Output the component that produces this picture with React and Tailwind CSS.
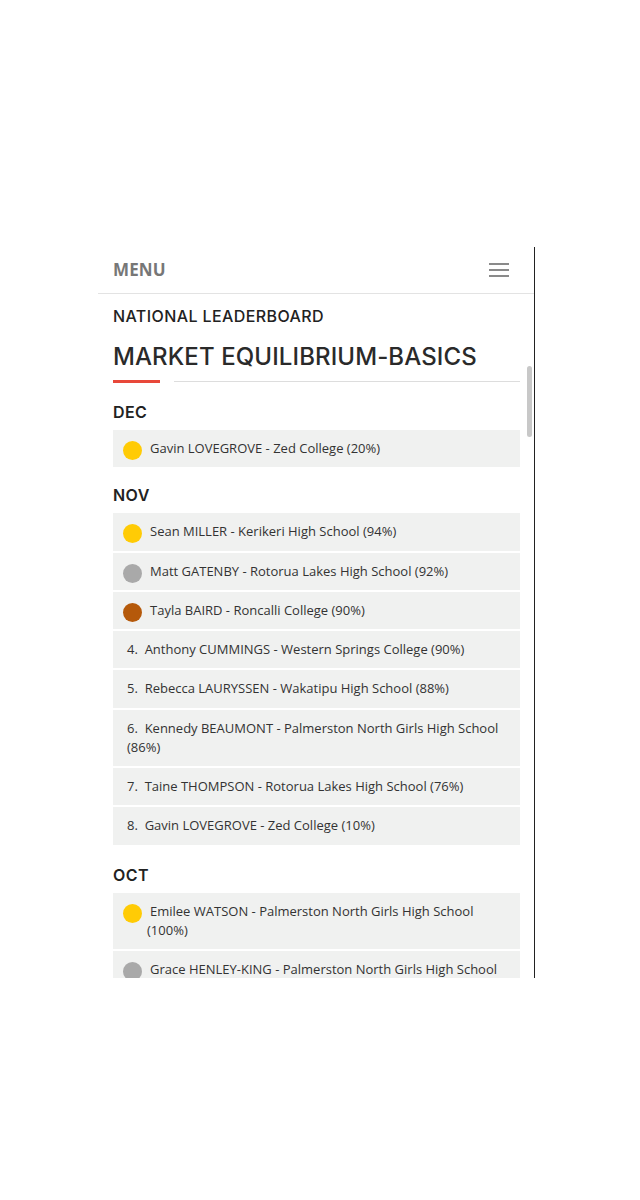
import React from "react";

const GOLD = "bg-[#ffcb05]";
const SILVER = "bg-[#a9a9a9]";
const BRONZE = "bg-[#b5590a]";

function MedalRow({ color, text }) {
  return (
    <div className="flex items-start bg-[#f0f1f0] pl-[10px] pr-[14px] py-[9px]">
      <span className={`mt-[2px] -mb-[2px] h-[19px] w-[19px] shrink-0 rounded-full ${color}`} />
      <span className="ml-[5px] indent-[3px] leading-[19.25px]">{text}</span>
    </div>
  );
}

function NumRow({ n, text }) {
  return (
    <div className="bg-[#f0f1f0] pl-[14px] pr-[14px] py-[9px] leading-[19.25px]">
      {n}.{"\u00a0 "}
      {text}
    </div>
  );
}

function Month({ label, className }) {
  return (
    <div
      className={`text-[16px] font-semibold text-[#222] leading-[20px] tracking-[0.4px] ${className}`}
      style={{ fontFamily: "Inter, sans-serif" }}
    >
      {label}
    </div>
  );
}

export default function App() {
  return (
    <div className="min-h-[1200px] w-[640px] bg-white">
      <div className="pt-[247px] pl-[98px]">
        <div className="relative flex h-[731px] w-[437px] flex-col overflow-hidden border-r border-[#222]">
          <div className="flex h-[47px] shrink-0 items-center justify-between border-b border-[#e3e3e3] pl-[15px] pr-[25px]">
            <span
              className="text-[17px] font-bold text-[#777] tracking-[0.1px]"
              style={{ fontFamily: "'Open Sans', sans-serif" }}
            >
              MENU
            </span>
            <div className="flex w-[20px] flex-col gap-[4px]">
              <span className="h-[2px] w-full bg-[#8a8a8a]" />
              <span className="h-[2px] w-full bg-[#8a8a8a]" />
              <span className="h-[2px] w-full bg-[#8a8a8a]" />
            </div>
          </div>
          <div className="pl-[15px] pr-[14px]" style={{ fontFamily: "'Open Sans', sans-serif" }}>
            <div
              className="mt-[12px] text-[16px] font-medium text-[#222] leading-[20px] tracking-[0.4px]"
              style={{ fontFamily: "Inter, sans-serif" }}
            >
              NATIONAL LEADERBOARD
            </div>
            <div
              className="mt-[17px] text-[24px] font-medium text-[#2a2a2a] leading-[28px] tracking-[0.1px]"
              style={{ fontFamily: "Inter, sans-serif" }}
            >
              MARKET EQUILIBRIUM-BASICS
            </div>
            <div className="mt-[9px] flex items-center">
              <span className="h-[3px] w-[47px] bg-[#e8483a]" />
              <span className="ml-[14px] h-[1px] flex-1 bg-[#dddddd]" />
            </div>
            <div className="text-[13px] text-[#333]">
              <Month label="DEC" className="mt-[19px]" />
              <div className="mt-[8px] flex flex-col gap-[2px]">
                <MedalRow color={GOLD} text="Gavin LOVEGROVE - Zed College (20%)" />
              </div>
              <Month label="NOV" className="mt-[18px]" />
              <div className="mt-[8px] flex flex-col gap-[2px]">
                <MedalRow color={GOLD} text="Sean MILLER - Kerikeri High School (94%)" />
                <MedalRow color={SILVER} text="Matt GATENBY - Rotorua Lakes High School (92%)" />
                <MedalRow color={BRONZE} text="Tayla BAIRD - Roncalli College (90%)" />
                <NumRow n={4} text="Anthony CUMMINGS - Western Springs College (90%)" />
                <NumRow n={5} text="Rebecca LAURYSSEN - Wakatipu High School (88%)" />
                <NumRow n={6} text="Kennedy BEAUMONT - Palmerston North Girls High School (86%)" />
                <NumRow n={7} text="Taine THOMPSON - Rotorua Lakes High School (76%)" />
                <NumRow n={8} text="Gavin LOVEGROVE - Zed College (10%)" />
              </div>
              <Month label="OCT" className="mt-[20px]" />
              <div className="mt-[8px] flex flex-col gap-[2px]">
                <MedalRow color={GOLD} text="Emilee WATSON - Palmerston North Girls High School (100%)" />
                <MedalRow color={SILVER} text="Grace HENLEY-KING - Palmerston North Girls High School" />
              </div>
            </div>
          </div>
          <span className="absolute left-[429px] top-[119px] h-[71px] w-[5px] rounded-full bg-[#c8c8c8]" />
        </div>
      </div>
    </div>
  );
}
